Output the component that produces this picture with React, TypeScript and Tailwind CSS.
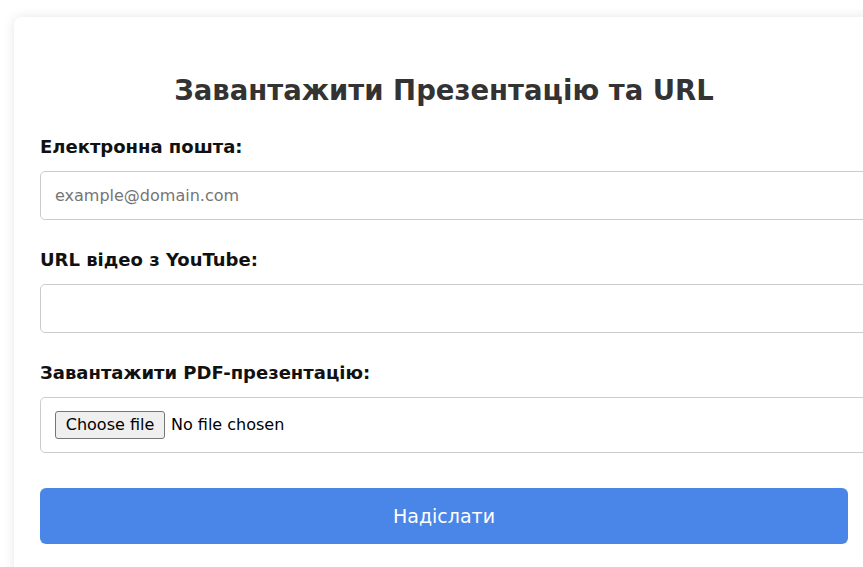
import React from "react";

const font = { fontFamily: '"DejaVu Sans", "Liberation Sans", Arial, sans-serif' };

function Field({ label, children }: { label: string; children: React.ReactNode }) {
  return (
    <div className="mb-[31px]">
      <label className="block text-[18px] leading-[17px] font-bold text-[#111] mb-[16px]">{label}</label>
      {children}
    </div>
  );
}

export default function App() {
  return (
    <div className="w-[863px] h-[567px] overflow-hidden bg-white" style={font}>
      <div className="ml-[14px] mt-[17px] w-[860px] rounded-[8px] bg-white shadow-[0_0_12px_rgba(0,0,0,0.1)] px-[26px] pt-[58px] pb-[40px]">
        <h1 className="text-center text-[27.5px] leading-[30px] font-bold text-[#333] mb-[33px]">
          Завантажити Презентацію та URL
        </h1>
        <form onSubmit={(e) => e.preventDefault()}>
          <Field label="Електронна пошта:">
            <input
              type="email"
              placeholder="example@domain.com"
              className="block w-[834px] h-[49px] px-[14px] text-[16px] border border-[#ccc] rounded-[5px] text-[#222] placeholder:text-[#757575] outline-none"
            />
          </Field>
          <Field label="URL відео з YouTube:">
            <input
              type="url"
              className="block w-[834px] h-[49px] px-[14px] text-[16px] border border-[#ccc] rounded-[5px] text-[#222] outline-none"
            />
          </Field>
          <div className="mb-[35px]">
            <label className="block text-[18px] leading-[17px] font-bold text-[#111] mb-[16px]">
              Завантажити PDF-презентацію:
            </label>
            <div className="flex items-center w-[834px] h-[56px] px-[14px] border border-[#ccc] rounded-[5px]">
              <button
                type="button"
                className="h-[28px] w-[110px] bg-[#efefef] border border-[#767676] rounded-[3px] text-[16px] text-black leading-none"
              >
                Choose file
              </button>
              <span className="ml-[6px] text-[16px] text-black">No file chosen</span>
            </div>
          </div>
          <button
            type="submit"
            className="block w-full h-[56px] rounded-[6px] bg-[#4a86e8] text-white text-[19px]"
          >
            Надіслати
          </button>
        </form>
      </div>
    </div>
  );
}
